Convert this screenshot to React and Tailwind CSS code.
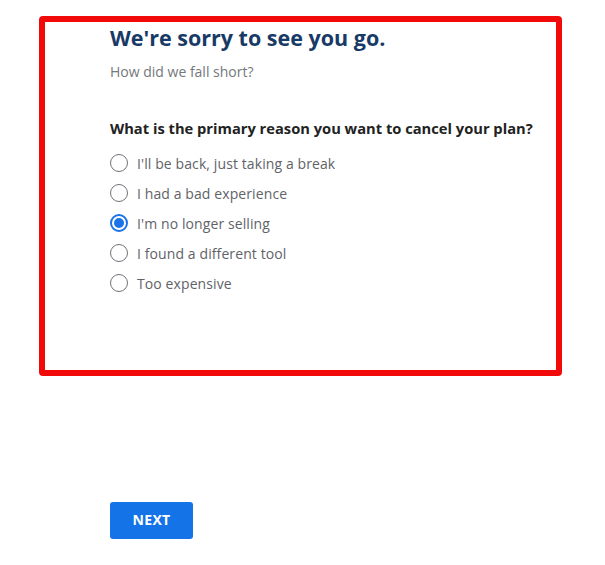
import React, { useState } from 'react';

const reasons = [
  "I'll be back, just taking a break",
  'I had a bad experience',
  "I'm no longer selling",
  'I found a different tool',
  'Too expensive',
];

const App = () => {
  const [selected, setSelected] = useState(2);

  return (
    <div className="w-[605px] h-[565px] bg-white pt-[16px] font-['Open_Sans','Noto_Sans',sans-serif]">
      {/* Highlighted survey card */}
      <div className="ml-[39px] w-[523px] h-[360px] border-[6px] border-[#f20a0a] rounded-[4px] pl-[65px] pt-[1px]">
        <h1 className="text-[21.5px] font-bold text-[#173a66] leading-[30px]">We're sorry to see you go.</h1>
        <p className="mt-[9px] text-[14px] text-[#74777b] leading-[20px]">How did we fall short?</p>

        <h3 className="mt-[36px] text-[14.7px] font-bold text-[#222] leading-[20px]">
          What is the primary reason you want to cancel your plan?
        </h3>

        <div className="mt-[10px] flex flex-col">
          {reasons.map((r, i) => (
            <label
              key={r}
              onClick={() => setSelected(i)}
              className="h-[30px] flex items-center gap-[9px] cursor-pointer"
            >
              {selected === i ? (
                <span className="w-[18px] h-[18px] rounded-full border-[2px] border-[#1a73e8] flex items-center justify-center shrink-0">
                  <span className="w-[10px] h-[10px] rounded-full bg-[#1a73e8]" />
                </span>
              ) : (
                <span className="w-[18px] h-[18px] rounded-full border-[1.5px] border-[#6f7378] shrink-0" />
              )}
              <span className="text-[14px] tracking-[0.1px] text-[#5f6368]">{r}</span>
            </label>
          ))}
        </div>
      </div>

      <button className="mt-[126px] ml-[110px] w-[83px] h-[37px] pb-[3px] bg-[#1473e6] rounded-[3px] text-white text-[14px] font-bold tracking-wide">
        NEXT
      </button>
    </div>
  );
};

export default App;
